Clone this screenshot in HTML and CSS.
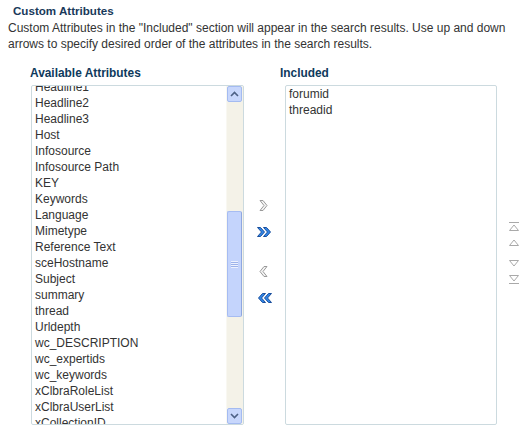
FILE: index.html
```html
<!DOCTYPE html>
<html lang="en">

<head>
    <meta charset="UTF-8">
    <title>Custom Attributes</title>
    <link rel="stylesheet" href="styles.css">
</head>

<body>
    <h1 class="title">Custom Attributes</h1>
    <p class="intro">Custom Attributes in the "Included" section will appear in the search results. Use up and down arrows to specify desired order of the attributes in the search results.</p>

    <div class="shuttle">
        <div class="column available">
            <h2>Available Attributes</h2>
            <div class="listbox">
                <ul class="items scrolled">
                    <li>Headline1</li>
                    <li>Headline2</li>
                    <li>Headline3</li>
                    <li>Host</li>
                    <li>Infosource</li>
                    <li>Infosource Path</li>
                    <li>KEY</li>
                    <li>Keywords</li>
                    <li>Language</li>
                    <li>Mimetype</li>
                    <li>Reference Text</li>
                    <li>sceHostname</li>
                    <li>Subject</li>
                    <li>summary</li>
                    <li>thread</li>
                    <li>Urldepth</li>
                    <li>wc_DESCRIPTION</li>
                    <li>wc_expertids</li>
                    <li>wc_keywords</li>
                    <li>xClbraRoleList</li>
                    <li>xClbraUserList</li>
                    <li>xCollectionID</li>
                </ul>
                <div class="scrollbar">
                    <div class="sb-button">
                        <svg width="9" height="6" viewBox="0 0 9 6"><path d="M1 5 L4.5 1.5 L8 5" fill="none" stroke="#4d6185" stroke-width="1.6"/></svg>
                    </div>
                    <div class="sb-track">
                        <div class="sb-thumb">
                            <span class="grip"></span>
                        </div>
                    </div>
                    <div class="sb-button">
                        <svg width="9" height="6" viewBox="0 0 9 6"><path d="M1 1 L4.5 4.5 L8 1" fill="none" stroke="#4d6185" stroke-width="1.6"/></svg>
                    </div>
                </div>
            </div>
        </div>

        <div class="moves">
            <svg class="move" width="9" height="11" viewBox="0 0 9 11"><path d="M1 0.5 H4 L8 5.5 L4 10.5 H1 L5 5.5 Z" fill="#f4f4f4" stroke="#9a9a9a"/></svg>
            <svg class="move all" width="15" height="10" viewBox="0 0 15 10"><path d="M0.5 0.5 H3.5 L7.5 5 L3.5 9.5 H0.5 L4.5 5 Z M6.5 0.5 H9.5 L13.5 5 L9.5 9.5 H6.5 L10.5 5 Z" fill="#2f86e8" stroke="#1b4f9c"/></svg>
            <svg class="move back" width="9" height="11" viewBox="0 0 9 11"><path d="M8 0.5 H5 L1 5.5 L5 10.5 H8 L4 5.5 Z" fill="#f4f4f4" stroke="#9a9a9a"/></svg>
            <svg class="move all" width="15" height="10" viewBox="0 0 15 10"><path d="M14.5 0.5 H11.5 L7.5 5 L11.5 9.5 H14.5 L10.5 5 Z M8.5 0.5 H5.5 L1.5 5 L5.5 9.5 H8.5 L4.5 5 Z" fill="#2f86e8" stroke="#1b4f9c"/></svg>
        </div>

        <div class="column included">
            <h2>Included</h2>
            <div class="listbox">
                <ul class="items">
                    <li>forumid</li>
                    <li>threadid</li>
                </ul>
            </div>
        </div>

        <div class="order">
            <svg class="first" width="12" height="9" viewBox="0 0 12 9"><path d="M1 0.5 H11 M1.5 8.5 L6 3 L10.5 8.5 Z" fill="none" stroke="#a9a9a9"/></svg>
            <svg class="up" width="12" height="7" viewBox="0 0 12 7"><path d="M1.5 6.5 L6 1 L10.5 6.5 Z" fill="none" stroke="#a9a9a9"/></svg>
            <svg class="down" width="12" height="7" viewBox="0 0 12 7"><path d="M1.5 0.5 L6 6 L10.5 0.5 Z" fill="none" stroke="#a9a9a9"/></svg>
            <svg class="last" width="12" height="9" viewBox="0 0 12 9"><path d="M1.5 0.5 L6 6 L10.5 0.5 Z M1 8.5 H11" fill="none" stroke="#a9a9a9"/></svg>
        </div>
    </div>
</body>

</html>
```

FILE: styles.css
```css
body {
    margin: 0;
    font-family: "Liberation Sans", Arial, sans-serif;
    font-size: 12px;
    color: #333333;
    background-color: #ffffff;
    overflow: hidden;
}

.title {
    margin: 0;
    padding: 4px 0 0 13px;
    font-size: 11.6px;
    line-height: 13px;
    font-weight: bold;
    color: #19395a;
}

.intro {
    margin: 3px 0 0;
    padding: 0 8px;
    line-height: 16px;
}

.shuttle {
    display: flex;
    align-items: flex-start;
    margin-top: 15px;
    padding-left: 30px;
}

.column h2 {
    margin: 0 0 5px;
    font-size: 11.9px;
    line-height: 13px;
    font-weight: bold;
    color: #0e3a5c;
}

.listbox {
    display: flex;
    height: 340px;
    border: 1px solid #ccdadf;
    border-radius: 2px;
    box-sizing: border-box;
    overflow: hidden;
}

.available .listbox {
    width: 213px;
    margin-left: 1px;
}

.included .listbox {
    width: 212px;
    margin-left: 5px;
}

.items {
    flex: 1;
    margin: 0;
    padding: 0 0 0 3px;
    list-style: none;
    line-height: 16px;
}

.scrolled {
    overflow: hidden;
}

.scrolled li:first-child {
    margin-top: -7px;
}

.scrollbar {
    display: flex;
    flex-direction: column;
    width: 16px;
    background-color: #f4f2e8;
    border-left: 1px solid #f9f8f2;
}

.sb-button {
    display: flex;
    align-items: center;
    justify-content: center;
    height: 16px;
    margin-right: 1px;
    background-color: #c8d7fc;
    border: 1px solid #a4bbf1;
    border-radius: 2px;
    box-sizing: border-box;
}

.sb-track {
    flex: 1;
    padding-top: 109px;
}

.sb-thumb {
    display: flex;
    align-items: center;
    justify-content: center;
    height: 106px;
    margin-right: 1px;
    background-color: #c4d4fc;
    border: 1px solid #a6bcf2;
    border-right-color: #8fa7e0;
    border-radius: 2px;
    box-sizing: border-box;
}

.grip {
    display: block;
    width: 7px;
    height: 7px;
    background: repeating-linear-gradient(to bottom, #eef2fe 0, #eef2fe 1px, #9db3ea 1px, #9db3ea 2px);
}

.moves {
    display: flex;
    flex-direction: column;
    align-items: flex-start;
    width: 36px;
    padding: 133px 0 0 13px;
    box-sizing: border-box;
}

.move {
    display: block;
    margin-left: 2px;
}

.move.all {
    margin-top: 16px;
    margin-left: 0;
}

.move.back {
    margin-top: 29px;
}

.order {
    display: flex;
    flex-direction: column;
    margin-left: 11px;
    padding-top: 155px;
}

.order svg {
    display: block;
}

.order .up {
    margin-top: 8px;
}

.order .down {
    margin-top: 14px;
}

.order .last {
    margin-top: 8px;
}
```
